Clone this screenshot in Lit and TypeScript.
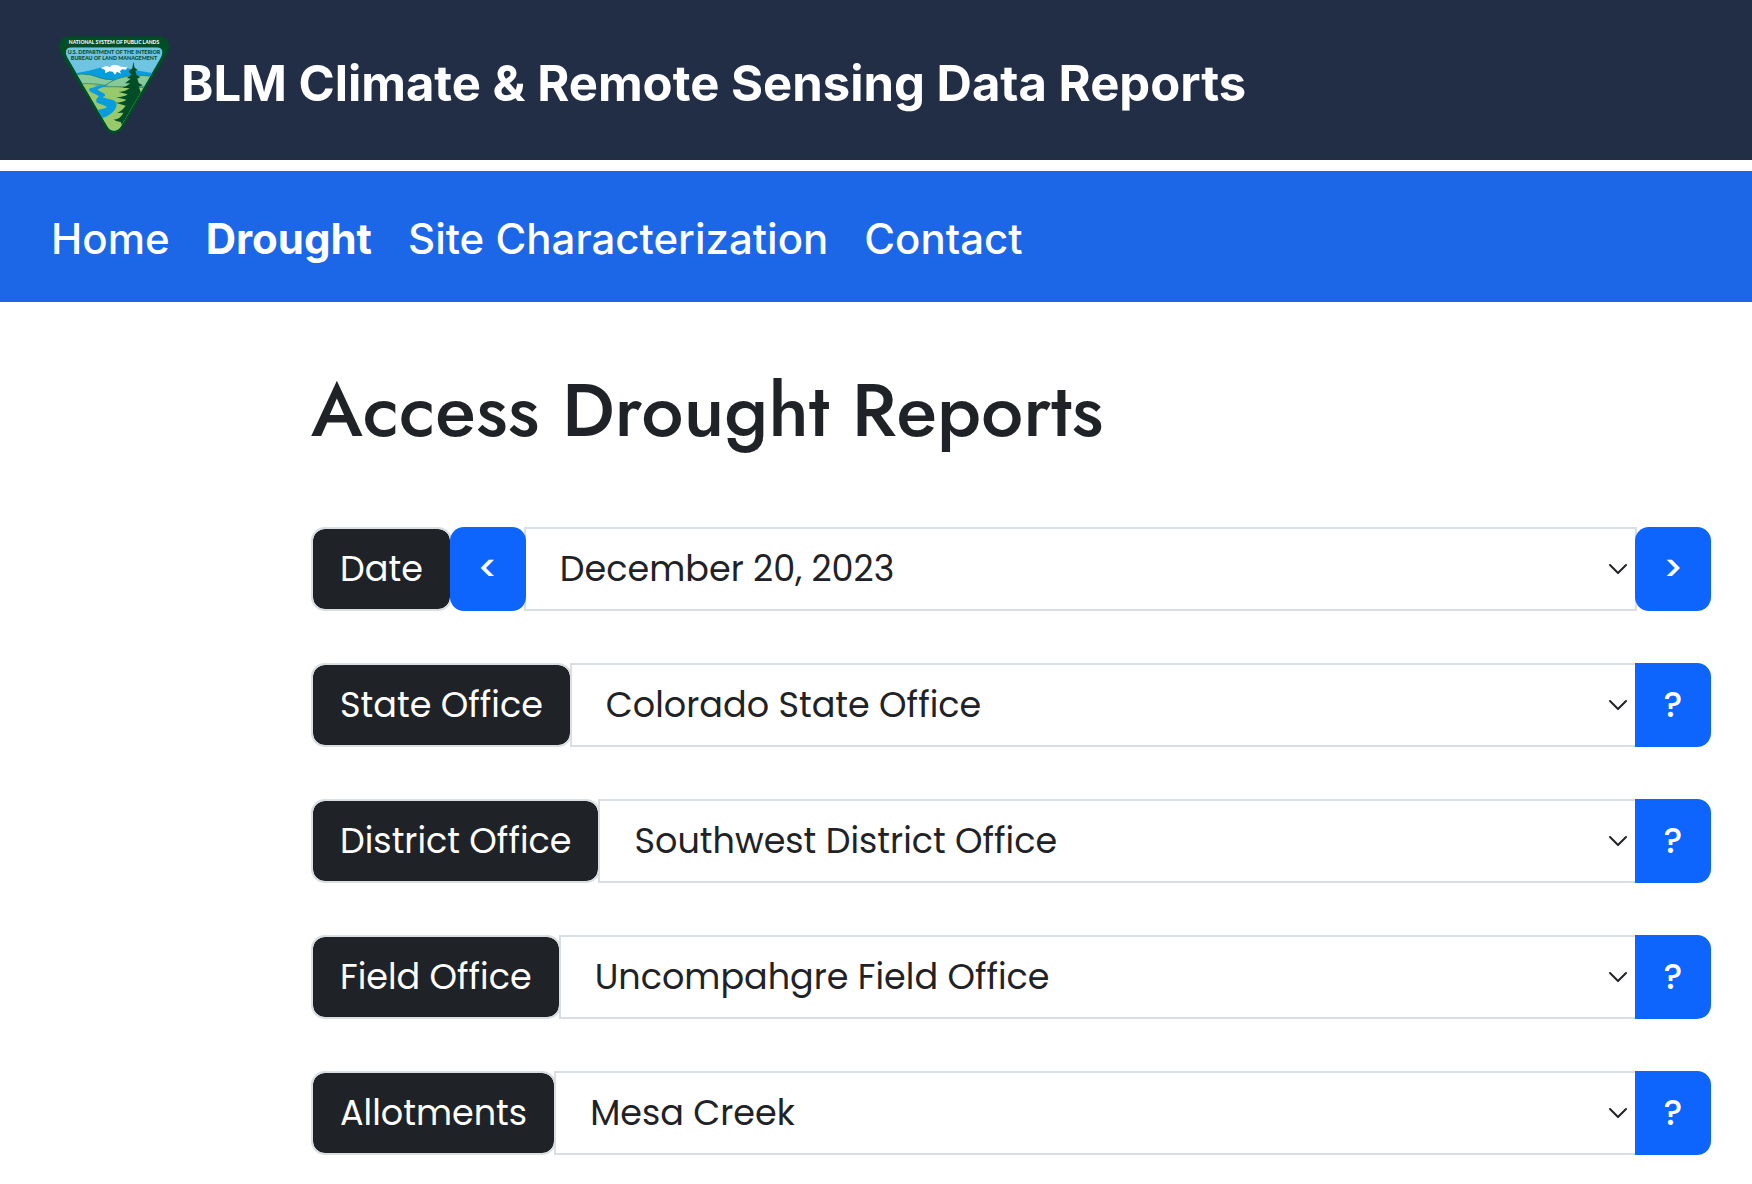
import { LitElement, html, css } from "lit";
import { customElement, property } from "lit/decorators.js";

interface Field {
  id: string;
  label: string;
  value: string;
}

const OFFICE_FIELDS: Field[] = [
  { id: "state-office", label: "State Office", value: "Colorado State Office" },
  { id: "district-office", label: "District Office", value: "Southwest District Office" },
  { id: "field-office", label: "Field Office", value: "Uncompahgre Field Office" },
  { id: "allotments", label: "Allotments", value: "Mesa Creek" },
];

@customElement("blm-logo")
export class BlmLogo extends LitElement {
  static styles = css`
    :host {
      display: block;
      line-height: 0;
    }
    .logo {
      width: 110px;
      height: 99px;
    }
    .caption {
      font-family: Lato, "Liberation Sans", sans-serif;
      font-weight: 900;
      text-anchor: middle;
    }
    .light {
      font-size: 15px;
      fill: #f4faf5;
    }
    .dark {
      font-size: 16px;
      fill: #064c2c;
    }
  `;

  render() {
    return html`
      <svg class="logo" viewBox="27 29 330 297" role="img" aria-label="Bureau of Land Management">
        <defs>
          <clipPath id="shield">
            <path d="M66 66H318Q342 66 336 88Q333 96 329 103L212 304Q203 316 192 316Q181 316 173 304L56 103Q50 94 48 86Q45 66 66 66Z" />
          </clipPath>
        </defs>
        <path
          fill="#004d26"
          d="M54 33H330Q353 36 357 58Q359 73 350 88L216 311Q207 325 192 325Q177 325 168 311L34 88Q25 73 28 58Q33 36 54 33Z"
        />
        <g clip-path="url(#shield)">
          <rect x="40" y="60" width="304" height="260" fill="#6fc4e2" />
          <path fill="#069ce0" d="M40 152Q80 143 112 137Q140 130 162 124L192 122L222 126Q260 138 340 148V200H40Z" />
          <path
            fill="#fff"
            d="M152 128L168 122L180 124L188 119L203 120L213 124L232 126L228 133L217 132L210 137L213 145L201 139L195 148L188 139L178 138L166 144L165 134Z"
          />
          <path fill="#86c99a" stroke="#2f7a55" stroke-width="2" d="M40 160Q95 134 148 157Q168 164 188 163L180 186H40Z" />
          <path fill="#98ca6c" stroke="#2f7a55" stroke-width="2" d="M60 178Q115 170 172 181L230 186H340V330H60Z" />
          <path fill="#86c99a" stroke="#2f7a55" stroke-width="2" d="M160 184Q194 158 232 153Q280 145 340 160V185Z" />
          <path
            fill="#069ce0"
            d="M127 181L178 178Q148 188 142 193Q150 198 163 205Q170 211 157 216Q166 219 190 224Q204 232 198 246Q192 266 157 279L143 253Q164 251 171 245Q162 239 141 232Q134 225 146 213Q143 208 126 202Q112 194 120 189Q134 186 142 182Z"
          />
          <path
            fill="#004d26"
            d="M250 109L254 127L263 134L256 137L260 150L271 155L262 160L266 173L278 180L266 184L272 200L281 208L268 212L258 240L218 304L212 290Q200 288 191 283Q213 280 220 262L202 263Q221 252 227 241L197 232Q220 231 229 223L199 216Q224 215 233 207L206 200Q228 198 239 189L218 187Q236 180 240 174L225 174L242 160L231 158L244 148L236 138L247 129Z"
          />
        </g>
        <text class="caption light" x="192" y="56">NATIONAL SYSTEM OF PUBLIC LANDS</text>
        <text class="caption dark" x="192" y="87">U.S. DEPARTMENT OF THE INTERIOR</text>
        <text class="caption dark" x="192" y="105">BUREAU OF LAND MANAGEMENT</text>
      </svg>
    `;
  }
}

@customElement("report-field")
export class ReportField extends LitElement {
  @property() fieldId = "";
  @property() label = "";
  @property() value = "";
  @property({ type: Boolean }) stepper = false;

  static styles = css`
    :host {
      display: block;
    }
    .group {
      display: flex;
      align-items: stretch;
      min-height: 84px;
      color: #1f2327;
      font-family: Poppins, Inter, "Liberation Sans", sans-serif;
      font-size: 35px;
      line-height: 52px;
    }
    .label {
      display: flex;
      align-items: center;
      box-sizing: border-box;
      padding: 0 27px;
      border: 2px solid #d9dee3;
      border-radius: 14px;
      background: #1f2327;
      background-clip: padding-box;
      color: #fff;
      white-space: nowrap;
    }
    .picker {
      display: grid;
      flex: 1;
      min-width: 0;
      align-items: center;
      margin: 0 -2px;
    }
    .select,
    .chevron {
      grid-area: 1 / 1;
    }
    .select {
      appearance: none;
      box-sizing: border-box;
      width: 100%;
      height: 100%;
      margin: 0;
      padding: 0 72px 0 34px;
      border: 2px solid #d9dee3;
      border-radius: 0;
      background: #fff;
      color: inherit;
      font: inherit;
      text-overflow: ellipsis;
    }
    .chevron {
      justify-self: end;
      width: 20px;
      height: 14px;
      margin-right: 9px;
      pointer-events: none;
    }
    .button {
      position: relative;
      width: 76px;
      flex: none;
      margin: 0;
      padding: 0;
      border: 0;
      border-radius: 0 14px 14px 0;
      background: #0d65fd;
      color: #fff;
      font: inherit;
      font-weight: 500;
      cursor: pointer;
    }
    .step {
      border-radius: 14px;
    }
    .label + .step {
      margin-left: -2px;
    }
  `;

  render() {
    return html`
      <div class="group">
        <label class="label" for=${this.fieldId}>${this.label}</label>
        ${this.stepper ? html`<button class="button step" type="button" aria-label="Previous">&lt;</button>` : ""}
        <div class="picker">
          <select class="select" id=${this.fieldId}>
            <option>${this.value}</option>
          </select>
          <svg class="chevron" viewBox="0 0 20 14" fill="none" stroke="#1f2327" stroke-width="2" stroke-linecap="round" stroke-linejoin="round" aria-hidden="true">
            <path d="M2 3L10 11L18 3" />
          </svg>
        </div>
        ${this.stepper
          ? html`<button class="button step" type="button" aria-label="Next">&gt;</button>`
          : html`<button class="button" type="button" aria-label="Help">?</button>`}
      </div>
    `;
  }
}

@customElement("app-root")
export class AppRoot extends LitElement {
  static styles = css`
    :host {
      display: block;
      min-height: 100vh;
      background: #fff;
      color: #1f2327;
      font-family: Inter, "Liberation Sans", sans-serif;
    }
    .banner {
      display: flex;
      align-items: center;
      gap: 12px;
      box-sizing: border-box;
      min-height: 160px;
      padding: 8px 59px 0;
      background: #212e46;
      color: #fff;
    }
    .title {
      margin: 0;
      font-size: 49px;
      font-weight: 700;
      line-height: 60px;
    }
    .nav {
      display: flex;
      align-items: center;
      gap: 36px;
      box-sizing: border-box;
      min-height: 131px;
      margin-top: 11px;
      padding: 4px 51px 0;
      background: #1b67e8;
      font-size: 42px;
      font-weight: 500;
      line-height: 60px;
    }
    .link {
      color: #fff;
      text-decoration: none;
    }
    .current {
      font-weight: 700;
    }
    .content {
      padding: 60px 41px 29px 311px;
    }
    .heading {
      margin: 0 0 69px;
      font-family: Jost, Lato, "Liberation Sans", sans-serif;
      font-size: 75px;
      font-weight: 500;
      line-height: 96px;
    }
    .fields {
      display: grid;
      gap: 52px;
    }
  `;

  render() {
    return html`
      <header class="banner">
        <blm-logo></blm-logo>
        <h1 class="title">BLM Climate &amp; Remote Sensing Data Reports</h1>
      </header>
      <nav class="nav">
        <a class="link" href="#home">Home</a>
        <a class="link current" href="#drought" aria-current="page">Drought</a>
        <a class="link" href="#site-characterization">Site Characterization</a>
        <a class="link" href="#contact">Contact</a>
      </nav>
      <main class="content">
        <h2 class="heading">Access Drought Reports</h2>
        <form class="fields">
          <report-field fieldId="date" label="Date" value="December 20, 2023" stepper></report-field>
          ${OFFICE_FIELDS.map(
            (f) => html`<report-field .fieldId=${f.id} .label=${f.label} .value=${f.value}></report-field>`,
          )}
        </form>
      </main>
    `;
  }
}
